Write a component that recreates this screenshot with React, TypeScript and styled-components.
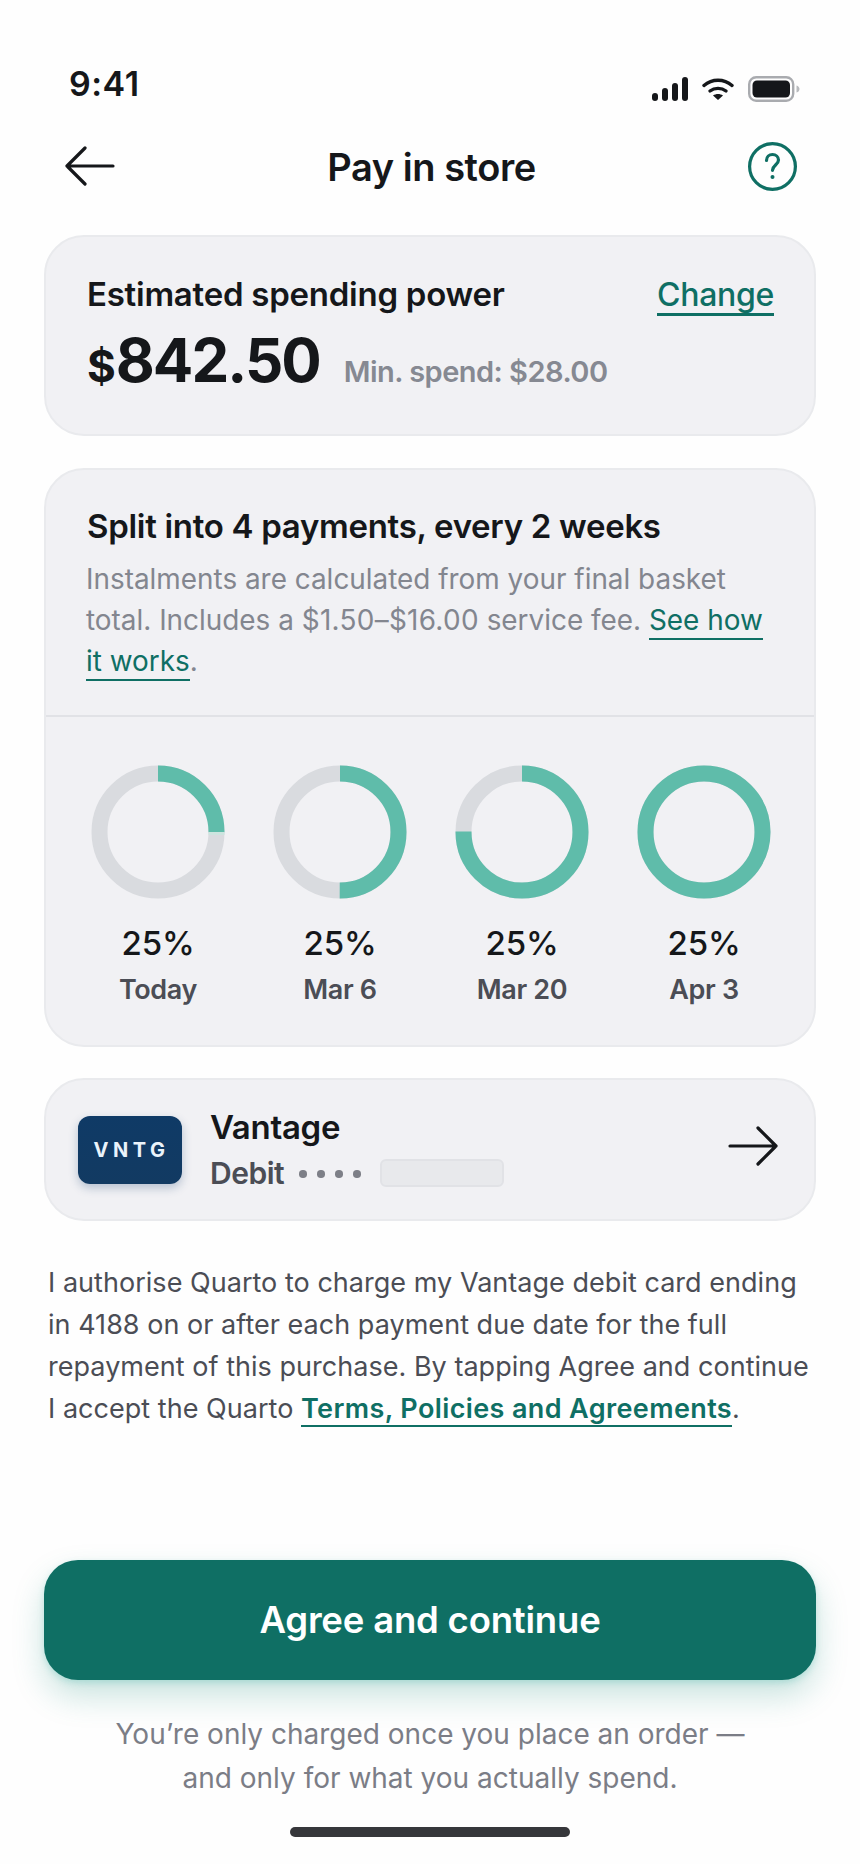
import React from "react";
import styled, { createGlobalStyle } from "styled-components";

const Global = createGlobalStyle`
  html, body { margin: 0; padding: 0; background: #fefefe; }
  * { box-sizing: border-box; }
  body { font-family: Inter, "Noto Sans", sans-serif; -webkit-font-smoothing: antialiased; }
`;

const Screen = styled.div`
  width: 860px;
  height: 1864px;
  background: #fefefe;
  padding: 0 44px;
  display: flex;
  flex-direction: column;
  color: #15171a;
`;

const StatusBar = styled.div`
  height: 56px;
  margin-top: 56px;
  padding: 0 16px 0 25px;
  display: flex;
  align-items: center;
  justify-content: space-between;
`;
const Time = styled.span`
  font-size: 34px;
  font-weight: 600;
  letter-spacing: 0.5px;
  line-height: 56px;
`;
const StatusIcons = styled.div`
  display: flex;
  align-items: center;
  gap: 14px;
  margin-top: 10px;
`;

const Header = styled.header`
  height: 68px;
  margin-top: 22px;
  display: flex;
  align-items: center;
  justify-content: space-between;
  padding: 0 19px 4px 21px;
`;
const Title = styled.h1`
  flex: 1;
  margin: 0;
  padding-top: 2px;
  font-size: 38px;
  font-weight: 600;
  letter-spacing: -0.45px;
  text-align: center;
`;

const Card = styled.section<{ $mt: number }>`
  margin-top: ${(p) => p.$mt}px;
  background: #f1f1f4;
  border: 2px solid #e9eaed;
  border-radius: 40px;
`;

const SpendCard = styled(Card)`
  height: 201px;
  padding: 37px 40px 0 41px;
`;
const SpendTop = styled.div`
  display: flex;
  justify-content: space-between;
  align-items: baseline;
`;
const SpendLabel = styled.div`
  font-size: 33px;
  font-weight: 600;
  letter-spacing: -0.25px;
  line-height: 40px;
`;
const ChangeLink = styled.a`
  font-size: 32px;
  font-weight: 500;
  line-height: 36px;
  letter-spacing: -0.3px;
  color: #0f6f64;
  border-bottom: 3px solid #0f6f64;
`;
const AmountRow = styled.div`
  display: flex;
  align-items: baseline;
  margin-top: 8px;
`;
const Currency = styled.span`
  font-size: 44px;
  font-weight: 700;
`;
const Amount = styled.span`
  font-size: 60px;
  font-weight: 700;
  letter-spacing: -2px;
  line-height: 72px;
`;
const MinSpend = styled.span`
  font-size: 29px;
  font-weight: 600;
  letter-spacing: -0.52px;
  color: #868992;
  margin-left: 24px;
`;

const SplitCard = styled(Card)``;
const SplitIntro = styled.div`
  padding: 36px 40px 33px 40px;
  border-bottom: 2px solid #e1e2e6;
`;
const SplitTitle = styled.h2`
  margin: 0 0 12.500px 1px;
  font-size: 33px;
  font-weight: 600;
  letter-spacing: -0.3px;
  line-height: 40px;
`;
const SplitText = styled.p`
  margin: 0;
  font-size: 27.9px;
  font-weight: 400;
  line-height: 41px;
  color: #83868f;
`;
const FeeRange = styled.span`
  letter-spacing: 0.3px;
`;
const InlineLink = styled.a`
  color: #0f6f64;
  border-bottom: 2px solid #0f6f64;
  padding-bottom: 1px;
`;
const Schedule = styled.div`
  display: grid;
  grid-template-columns: repeat(4, 182px);
  padding: 48px 20px 37px 21px;
`;
const Step = styled.div`
  display: flex;
  flex-direction: column;
  align-items: center;
`;
const Percent = styled.div`
  margin-top: 24px;
  font-size: 33px;
  font-weight: 500;
  letter-spacing: -0.1px;
  line-height: 40px;
`;
const StepDate = styled.div`
  margin-top: 9px;
  font-size: 27px;
  font-weight: 600;
  letter-spacing: -0.35px;
  line-height: 36px;
  color: #4b4d55;
`;

const MethodCard = styled(Card)`
  height: 143px;
  padding: 0 36px 0 32px;
  display: flex;
  align-items: center;
`;
const BankLogo = styled.div`
  width: 104px;
  height: 68px;
  margin-top: 2px;
  border-radius: 12px;
  background: linear-gradient(180deg, #0f3a66 0%, #123a62 100%);
  box-shadow: 0 4px 10px rgba(30, 70, 120, 0.28);
  display: flex;
  align-items: center;
  justify-content: center;
  color: #eaf3fb;
  font-size: 20px;
  font-weight: 700;
  letter-spacing: 4.500px;
  padding-left: 3px;
`;
const MethodText = styled.div`
  flex: 1;
  margin-left: 28px;
`;
const BankName = styled.div`
  font-size: 33px;
  font-weight: 600;
  letter-spacing: -0.3px;
  line-height: 48px;
`;
const CardLine = styled.div`
  display: flex;
  align-items: center;
  height: 44px;
`;
const CardType = styled.span`
  font-size: 30px;
  font-weight: 600;
  letter-spacing: -0.5px;
  color: #4b4d55;
`;
const Dots = styled.span`
  display: flex;
  gap: 10.500px;
  margin: 2px 19px 0 15px;
`;
const Dot = styled.i`
  width: 7.500px;
  height: 7.500px;
  border-radius: 50%;
  background: #7d7f87;
`;
const Masked = styled.span`
  width: 124px;
  height: 28px;
  border-radius: 6px;
  background: #e8e9ec;
  border: 2px solid #e1e2e6;
`;
const ForwardArrow = styled.svg`
  margin-top: -6px;
`;

const Legal = styled.p`
  margin: 41px 0 0 4px;
  font-size: 27px;
  line-height: 42px;
  font-weight: 400;
  color: #4b4d55;
  letter-spacing: 0.03px;
  white-space: nowrap;
`;
const LegalLink = styled.a`
  color: #0f6f64;
  font-weight: 600;
  letter-spacing: 0.38px;
  border-bottom: 2px solid #0f6f64;
`;

const Spacer = styled.div`
  flex: 1;
`;
const Cta = styled.button`
  width: 772px;
  height: 120px;
  border: 0;
  border-radius: 34px;
  background: #0f6f64;
  color: #fff;
  font-family: inherit;
  font-size: 36.500px;
  font-weight: 600;
  letter-spacing: -0.2px;
  box-shadow: 0 16px 32px rgba(15, 130, 115, 0.22), 0 3px 6px rgba(70, 190, 180, 0.25);
`;
const Reassure = styled.p`
  margin: 32px 0 0;
  text-align: center;
  font-size: 28px;
  line-height: 44px;
  color: #7b7d86;
`;
const HomeBar = styled.div`
  width: 280px;
  height: 10px;
  border-radius: 5px;
  background: #36373b;
  margin: 27px auto 27px;
`;

const Donut = ({ filled }: { filled: number }) => {
  const r = 58.5;
  const c = 2 * Math.PI * r;
  return (
    <svg width="134" height="134" viewBox="0 0 134 134">
      <circle cx="67" cy="67" r={r} fill="none" stroke="#d9dbdf" strokeWidth="16" />
      <circle
        cx="67"
        cy="67"
        r={r}
        fill="none"
        stroke="#5fbcaa"
        strokeWidth="16"
        strokeDasharray={`${c * filled} ${c}`}
        transform="rotate(-90 67 67)"
      />
      {filled === 0.25 && <rect x="117.500" y="67" width="16" height="3" fill="#cde4df" />}
    </svg>
  );
};

const steps = [
  { date: "Today", filled: 0.25 },
  { date: "Mar 6", filled: 0.5 },
  { date: "Mar 20", filled: 0.75 },
  { date: "Apr 3", filled: 1 },
];

export default function App() {
  return (
    <Screen>
      <Global />
      <StatusBar>
        <Time>9:41</Time>
        <StatusIcons>
          <svg width="36" height="24" viewBox="0 0 36 24" fill="#15171a">
            <rect x="0" y="16" width="6" height="8" rx="3" />
            <rect x="10" y="11" width="6" height="13" rx="3" />
            <rect x="20" y="6" width="6" height="18" rx="3" />
            <rect x="30" y="0" width="6" height="24" rx="3" />
          </svg>
          <svg width="32" height="22" viewBox="0 0 32 22" fill="none" stroke="#15171a" strokeWidth="3.4" strokeLinecap="round">
            <path d="M2 7.500C10 0.500 22 0.500 30 7.500" />
            <path d="M8 13C12.500 9.500 19.500 9.500 24 13" />
            <path d="M16 22l-5-4.500c3-2 7-2 10 0z" fill="#15171a" stroke="none" />
          </svg>
          <svg width="52" height="26" viewBox="0 0 52 26">
            <rect x="1.200" y="1.200" width="44" height="23.600" rx="7" fill="none" stroke="#a9abaf" strokeWidth="2.400" />
            <rect x="4.500" y="4.500" width="37.500" height="17" rx="4.500" fill="#15171a" />
            <path d="M48.500 9.500c2 .5 3 2 3 3.500s-1 3-3 3.500z" fill="#b9bbbe" />
          </svg>
        </StatusIcons>
      </StatusBar>

      <Header>
        <svg width="50" height="40" viewBox="0 0 50 40" fill="none" stroke="#15171a" strokeWidth="3.200" strokeLinecap="round" strokeLinejoin="round">
          <path d="M48 20H2M20 2 2 20l18 18" />
        </svg>
        <Title>Pay in store</Title>
        <svg width="49" height="49" viewBox="0 0 49 49" fill="none" stroke="#0f6f64" strokeWidth="3.200" strokeLinecap="round">
          <circle cx="24.500" cy="24.500" r="22.900" />
          <path d="M18.500 18.500c0-3.500 2.700-6 6-6s6 2.400 6 5.600c0 4.700-6 5.200-6 10.200" />
          <circle cx="24.500" cy="35" r="2" fill="#0f6f64" stroke="none" />
        </svg>
      </Header>

      <SpendCard $mt={33}>
        <SpendTop>
          <SpendLabel>Estimated spending power</SpendLabel>
          <ChangeLink>Change</ChangeLink>
        </SpendTop>
        <AmountRow>
          <Currency>$</Currency>
          <Amount>842.50</Amount>
          <MinSpend>Min. spend: $28.00</MinSpend>
        </AmountRow>
      </SpendCard>

      <SplitCard $mt={32}>
        <SplitIntro>
          <SplitTitle>Split into 4 payments, every 2 weeks</SplitTitle>
          <SplitText>
            Instalments are calculated from your final basket
            <br />
            total. Includes a <FeeRange>$1.50–$16.00</FeeRange> service fee. <InlineLink>See how</InlineLink>
            <br />
            <InlineLink>it works</InlineLink>.
          </SplitText>
        </SplitIntro>
        <Schedule>
          {steps.map((s) => (
            <Step key={s.date}>
              <Donut filled={s.filled} />
              <Percent>25%</Percent>
              <StepDate>{s.date}</StepDate>
            </Step>
          ))}
        </Schedule>
      </SplitCard>

      <MethodCard $mt={31}>
        <BankLogo>VNTG</BankLogo>
        <MethodText>
          <BankName>Vantage</BankName>
          <CardLine>
            <CardType>Debit</CardType>
            <Dots>
              <Dot />
              <Dot />
              <Dot />
              <Dot />
            </Dots>
            <Masked />
          </CardLine>
        </MethodText>
        <ForwardArrow width="50" height="40" viewBox="0 0 50 40" fill="none" stroke="#15171a" strokeWidth="3.200" strokeLinecap="round" strokeLinejoin="round">
          <path d="M2 20h46M30 2l18 18-18 18" />
        </ForwardArrow>
      </MethodCard>

      <Legal>
        I authorise Quarto to charge my Vantage debit card ending
        <br />
        in 4188 on or after each payment due date for the full
        <br />
        repayment of this purchase. By tapping Agree and continue
        <br />I accept the Quarto <LegalLink>Terms, Policies and Agreements</LegalLink>.
      </Legal>

      <Spacer />
      <Cta>Agree and continue</Cta>
      <Reassure>
        You’re only charged once you place an order —
        <br />
        and only for what you actually spend.
      </Reassure>
      <HomeBar />
    </Screen>
  );
}
